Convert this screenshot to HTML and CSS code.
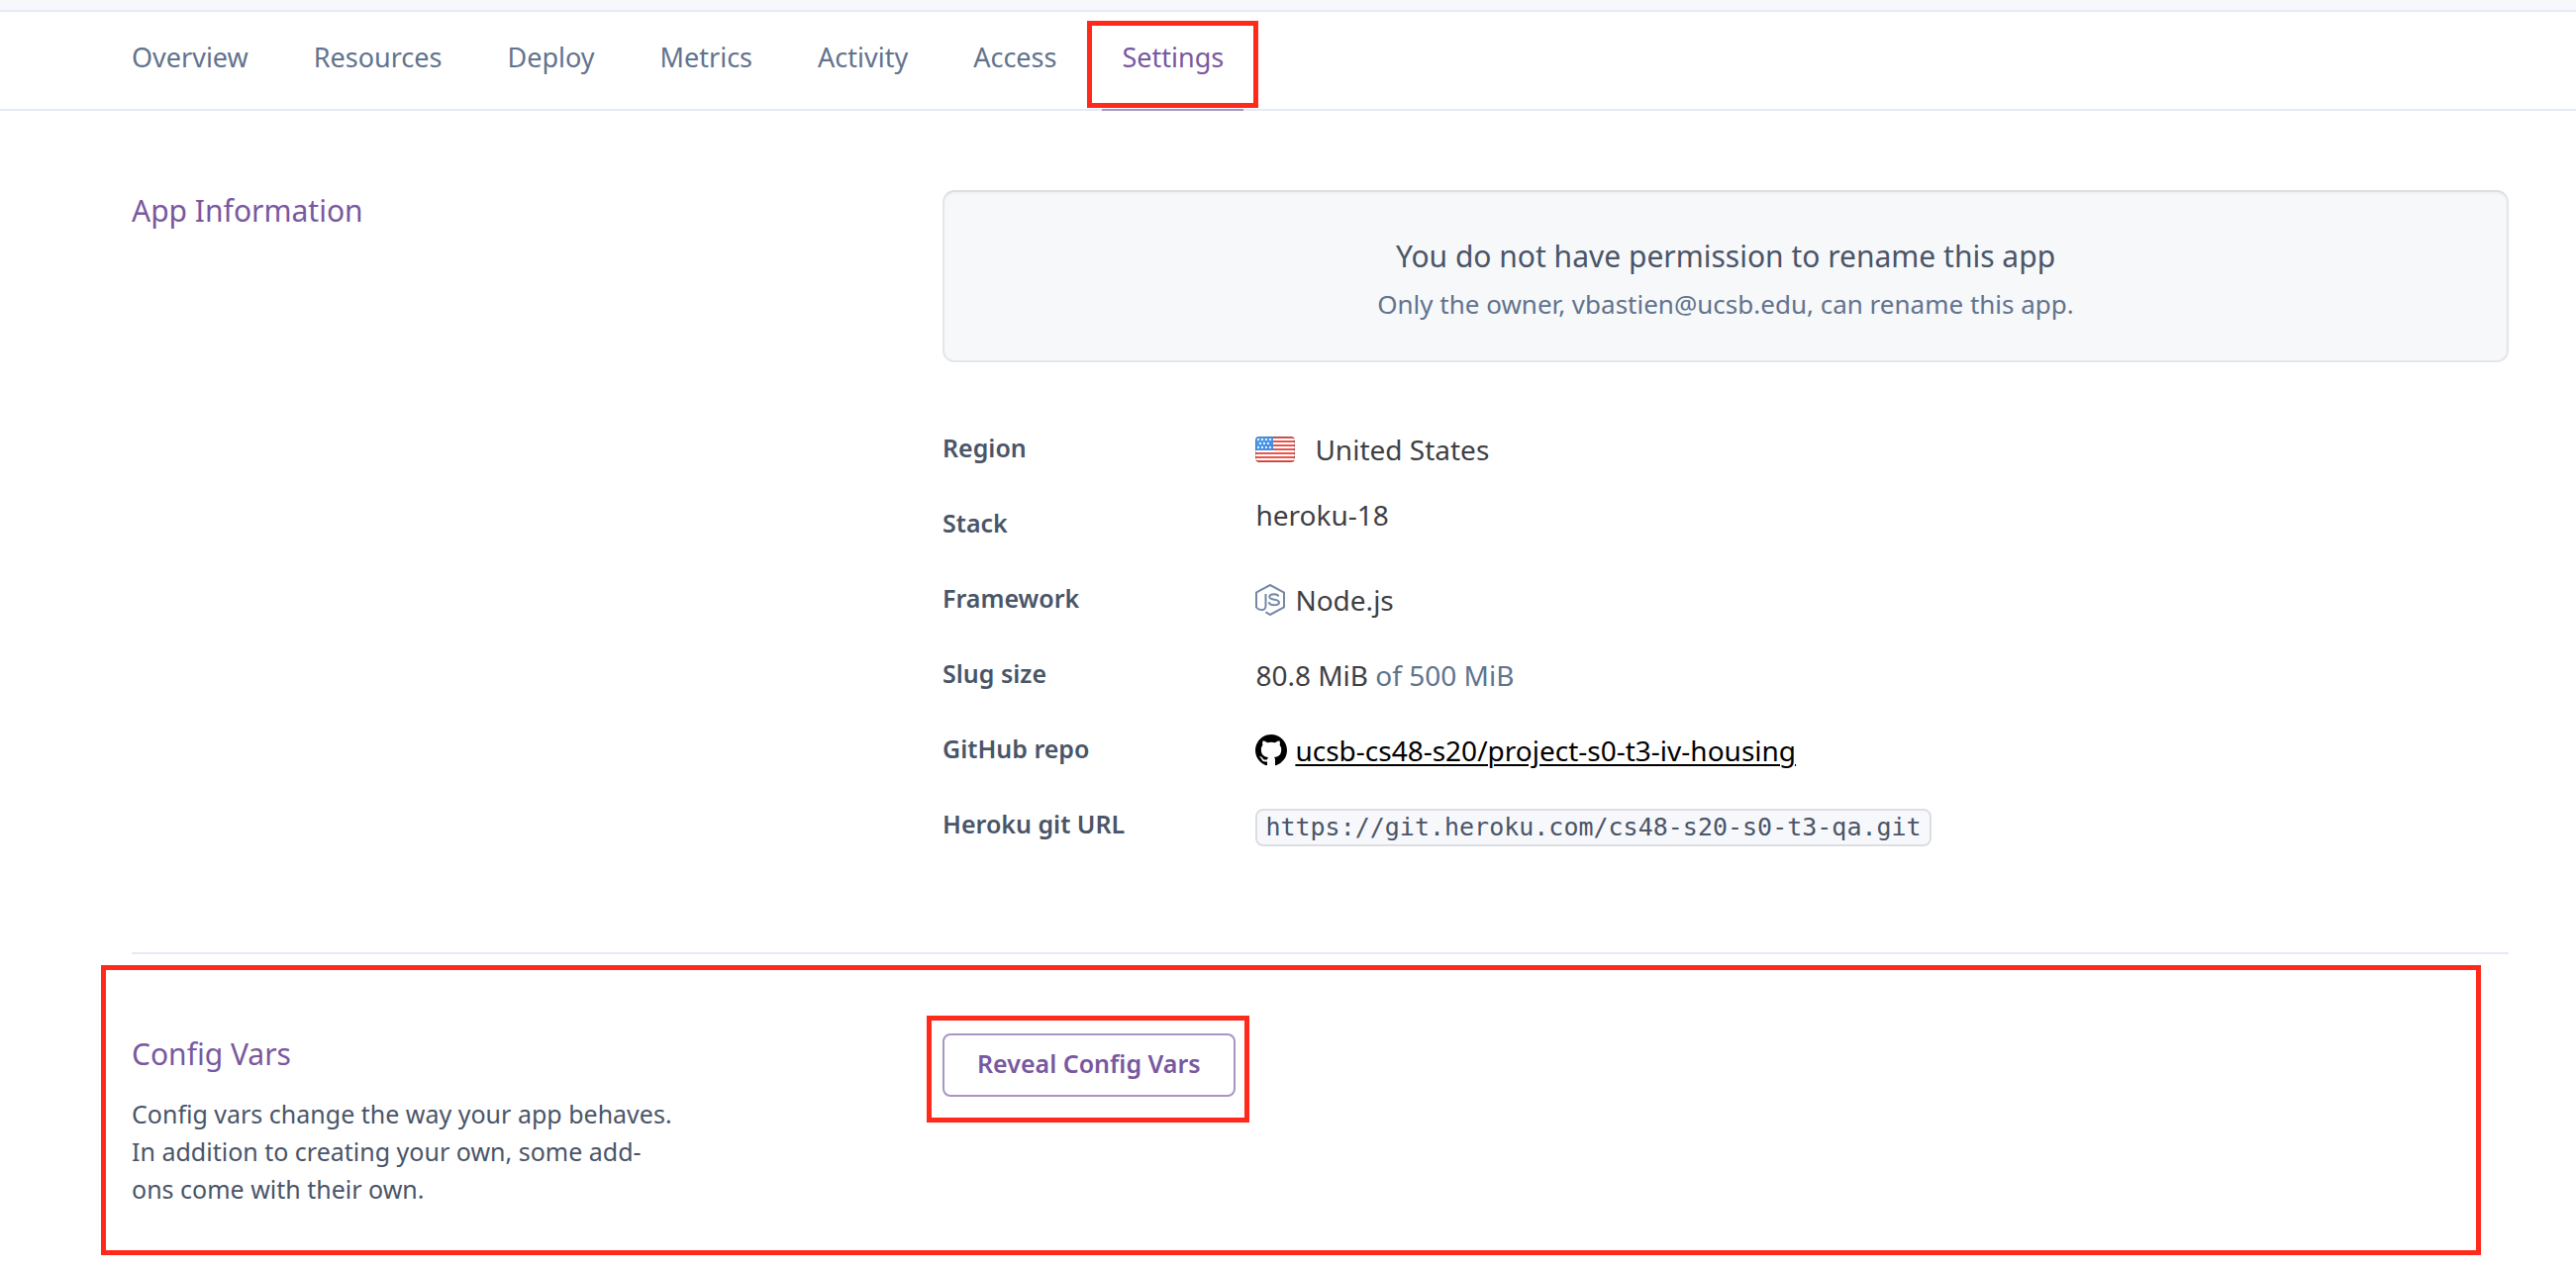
FILE: index.html
```
<!DOCTYPE html>
<html lang="en">
<head>
<meta charset="utf-8">
<meta name="viewport" content="width=device-width, initial-scale=1">
<title>App Settings</title>
<link rel="stylesheet" href="styles.css">
</head>
<body>
<header class="topbar"></header>
<nav class="tabs" aria-label="App">
  <a class="tab" href="#overview">Overview</a>
  <a class="tab" href="#resources">Resources</a>
  <a class="tab" href="#deploy">Deploy</a>
  <a class="tab" href="#metrics">Metrics</a>
  <a class="tab" href="#activity">Activity</a>
  <a class="tab" href="#access">Access</a>
  <a class="tab tab-active" href="#settings" aria-current="page">Settings<span class="mark mark-tab"></span></a>
</nav>
<main class="content">
  <section class="section section-info">
    <h2 class="section-title">App Information</h2>
    <div>
      <div class="notice">
        <p class="notice-title">You do not have permission to rename this app</p>
        <p class="notice-text">Only the owner, vbastien@ucsb.edu, can rename this app.</p>
      </div>
      <dl class="details">
        <div class="row">
          <dt class="label">Region</dt>
          <dd class="value value-flag">
            <svg class="flag" viewBox="0 0 40 26" aria-hidden="true">
              <defs>
                <clipPath id="flag-shape"><rect width="40" height="26" rx="4"/></clipPath>
                <linearGradient id="canton" x1="0" y1="0" x2="1" y2="1"><stop offset="0" stop-color="#5aa7ee"/><stop offset="1" stop-color="#3f86e2"/></linearGradient>
              </defs>
              <g clip-path="url(#flag-shape)">
                <rect width="40" height="26" fill="#fff"/>
                <path d="M0 1h40M0 5h40M0 9h40M0 13h40M0 17h40M0 21h40M0 25h40" stroke="#e4574f" stroke-width="2"/>
                <rect width="18" height="14" fill="url(#canton)"/>
                <path d="M2 3h14M4 7h12M2 11h14" stroke="#e3effc" stroke-width="2" stroke-dasharray="2 2"/>
                <rect x=".5" y=".5" width="39" height="25" rx="3.5" fill="none" stroke="#000" stroke-opacity=".2"/>
              </g>
            </svg>
            United States
          </dd>
        </div>
        <div class="row">
          <dt class="label">Stack</dt>
          <dd class="value value-stack">heroku-18</dd>
        </div>
        <div class="row">
          <dt class="label">Framework</dt>
          <dd class="value">
            <svg class="icon" viewBox="0 0 30 32" fill="none" stroke="#7588a5" stroke-width="2" aria-hidden="true">
              <path d="M10.500 28.300L15 31L29 23.500V8.500L15 1L1 8.500V23.500C3 26 10.500 28.500 10.500 22V10"/>
              <path d="M23.500 12.500C23 10.800 21.500 10.200 19 10.200C16 10.200 14.300 11.300 14.300 13C14.300 17 24 14.300 24 18.500C24 20.500 22 21.300 19 21.300C16 21.300 14 20.400 13.700 18.200"/>
            </svg>
            Node.js
          </dd>
        </div>
        <div class="row">
          <dt class="label">Slug size</dt>
          <dd class="value"><span>80.8 MiB <span class="muted">of 500 MiB</span></span></dd>
        </div>
        <div class="row">
          <dt class="label">GitHub repo</dt>
          <dd class="value value-repo">
            <svg class="icon icon-github" viewBox="0 0 16 16" aria-hidden="true"><path d="M8 0C3.58 0 0 3.58 0 8c0 3.540 2.290 6.530 5.470 7.590.4.070.55-.17.55-.38 0-.19-.01-.82-.01-1.490-2.010.37-2.530-.49-2.690-.94-.09-.23-.48-.94-.82-1.130-.28-.15-.68-.52-.01-.53.63-.01 1.080.58 1.230.82.72 1.210 1.870.87 2.330.66.07-.52.28-.87.51-1.070-1.780-.2-3.640-.89-3.640-3.950 0-.87.31-1.590.82-2.150-.08-.2-.36-1.020.08-2.120 0 0 .67-.21 2.200.82.64-.18 1.320-.27 2-.27s1.360.09 2 .27c1.530-1.040 2.200-.82 2.200-.82.44 1.100.16 1.920.08 2.120.51.56.82 1.270.82 2.150 0 3.070-1.870 3.750-3.650 3.950.29.25.54.73.54 1.480 0 1.070-.01 1.930-.01 2.200 0 .21.15.46.55.38A8.010 8.010 0 0 0 16 8c0-4.420-3.580-8-8-8z"/></svg>
            <a class="repo" href="#repo">ucsb-cs48-s20/project-s0-t3-iv-housing</a>
          </dd>
        </div>
        <div class="row">
          <dt class="label">Heroku git URL</dt>
          <dd class="value value-code"><code class="url">https://git.heroku.com/cs48-s20-s0-t3-qa.git</code></dd>
        </div>
      </dl>
    </div>
  </section>
  <section class="section section-config">
    <div>
      <h2 class="section-title">Config Vars</h2>
      <p class="section-text">Config vars change the way your app behaves. In addition to creating your own, some add-ons come with their own.</p>
    </div>
    <div>
      <div class="reveal">
        <button class="button" type="button">Reveal Config Vars</button>
        <span class="mark mark-button"></span>
      </div>
    </div>
    <span class="mark mark-section"></span>
  </section>
</main>
</body>
</html>
```
FILE: styles.css
```
* { box-sizing: border-box; }

body {
  margin: 0;
  background: #fff;
  color: #3f3f44;
  font-family: "Noto Sans", "Open Sans", sans-serif;
  font-size: 28px;
}

h2, p, dl, dd { margin: 0; }

.topbar {
  height: 12px;
  background: #f7f8fc;
  border-bottom: 2px solid #e6eaf4;
}

.tabs {
  display: flex;
  gap: 26px;
  padding: 0 68px 0 113px;
  box-shadow: inset 0 -2px #e6eaf4;
}

.tab {
  position: relative;
  padding: 26px 20px 32px;
  border-bottom: 2px solid transparent;
  color: #62738d;
  font-size: 27px;
  line-height: 40px;
  text-decoration: none;
}

.tab-active {
  color: #79589f;
  border-bottom-color: #a995c4;
}

.content { padding: 0 68px 0 133px; }

.section {
  display: grid;
  grid-template-columns: minmax(0, 1fr) minmax(0, 2fr);
  column-gap: 28px;
  padding-top: 80px;
}

.section-info {
  padding-bottom: 92px;
  border-bottom: 2px solid #e6eaf4;
}

.section-config {
  position: relative;
  padding-bottom: 64px;
}

.section-title {
  color: #79589f;
  font-size: 30px;
  font-weight: 400;
  line-height: 42px;
}

.section-text {
  max-width: 552px;
  margin-top: 20px;
  color: #4a5568;
  font-size: 25px;
  line-height: 38px;
}

.notice {
  padding: 40px 20px 34px;
  border: 2px solid #e4e6ea;
  border-top-color: #dcdfe3;
  border-radius: 12px;
  background: #f7f8fa;
  box-shadow: inset 0 2px 2px rgba(0, 0, 0, 0.03);
  text-align: center;
}

.notice-title {
  color: #4a5568;
  font-size: 30px;
  line-height: 50px;
}

.notice-text {
  color: #62738d;
  font-size: 26px;
  line-height: 46px;
}

.details { margin-top: 48px; }

.row {
  display: grid;
  grid-template-columns: 20% minmax(0, 1fr);
  align-items: center;
  min-height: 76px;
}

.label {
  color: #4a5568;
  font-size: 25px;
  font-weight: 600;
  line-height: 38px;
}

.value {
  display: flex;
  align-items: center;
  gap: 10px;
  padding-top: 4px;
  line-height: 38px;
}

.value-flag { gap: 20px; }
.value-repo { gap: 8px; }
.value-stack { padding-bottom: 20px; }
.value-code { padding-top: 8px; }

.flag { width: 40px; height: 26px; }
.icon { width: 30px; height: 32px; }
.icon-github { width: 32px; }

.muted { color: #62738d; }

.repo {
  color: #000;
  text-decoration-thickness: 2px;
  text-underline-offset: 3px;
}

.url {
  padding: 0 8px;
  border: 2px solid #dcdee2;
  border-radius: 8px;
  background: #f7f8fc;
  color: #4a5568;
  font-family: "DejaVu Sans Mono", monospace;
  font-size: 25px;
  line-height: 34px;
}

.reveal {
  position: relative;
  display: inline-block;
}

.button {
  display: block;
  height: 64px;
  padding: 0 33px 4px;
  border: 2px solid #a995c4;
  border-radius: 8px;
  background: #fff;
  color: #79589f;
  font-family: inherit;
  font-size: 25px;
  font-weight: 600;
}

/* Red call-out frames laid over the page */
.mark {
  position: absolute;
  border: 5px solid #ff2a1c;
  pointer-events: none;
}

.mark-tab { inset: 9px -15px 1px; }
.mark-button { inset: -18px -14px -26px -16px; }
.mark-section { inset: 11px 28px 16px -31px; }
```
